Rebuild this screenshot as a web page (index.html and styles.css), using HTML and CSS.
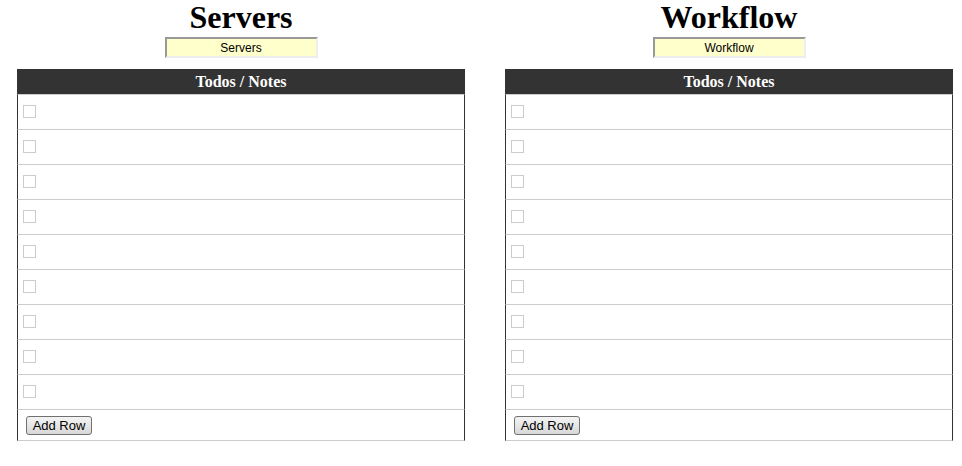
FILE: index.html
```html
<!DOCTYPE html>
<html>
<head>
<meta charset="utf-8">
<link rel="stylesheet" href="styles.css">
</head>
<body>
<div class="page">
  <section class="panel">
    <h1 class="title">Servers</h1>
    <input class="name" type="text" value="Servers">
    <div class="list">
      <div class="head">Todos / Notes</div>
      <div class="row"><span class="box"></span></div>
      <div class="row"><span class="box"></span></div>
      <div class="row"><span class="box"></span></div>
      <div class="row"><span class="box"></span></div>
      <div class="row"><span class="box"></span></div>
      <div class="row"><span class="box"></span></div>
      <div class="row"><span class="box"></span></div>
      <div class="row"><span class="box"></span></div>
      <div class="row"><span class="box"></span></div>
      <div class="row add"><button class="btn">Add Row</button></div>
    </div>
  </section>
  <section class="panel">
    <h1 class="title">Workflow</h1>
    <input class="name" type="text" value="Workflow">
    <div class="list">
      <div class="head">Todos / Notes</div>
      <div class="row"><span class="box"></span></div>
      <div class="row"><span class="box"></span></div>
      <div class="row"><span class="box"></span></div>
      <div class="row"><span class="box"></span></div>
      <div class="row"><span class="box"></span></div>
      <div class="row"><span class="box"></span></div>
      <div class="row"><span class="box"></span></div>
      <div class="row"><span class="box"></span></div>
      <div class="row"><span class="box"></span></div>
      <div class="row add"><button class="btn">Add Row</button></div>
    </div>
  </section>
</div>
</body>
</html>
```
FILE: styles.css
```css
html, body {
  margin: 0;
  padding: 0;
  background: #fff;
}
.page {
  display: flex;
  gap: 40px;
  padding-left: 17px;
}
.panel {
  width: 448px;
  display: flex;
  flex-direction: column;
  align-items: center;
}
.title {
  margin: 0;
  font-family: "Liberation Serif", "Times New Roman", serif;
  font-weight: bold;
  font-size: 32px;
  line-height: 34px;
  color: #000;
}
.name {
  margin: 3px 0 0 0;
  width: 153px;
  height: 21px;
  box-sizing: border-box;
  padding: 1px 0 0 0;
  border-style: solid;
  border-width: 2px;
  border-color: #999 #eee #eee #999;
  background: #ffffcc;
  text-align: center;
  font-family: "Liberation Sans", Arial, sans-serif;
  font-size: 12px;
  color: #000;
}
.list {
  margin-top: 11px;
  width: 100%;
}
.head {
  height: 25px;
  background: #333;
  color: #fff;
  text-align: center;
  font-family: "Liberation Serif", "Times New Roman", serif;
  font-weight: bold;
  font-size: 16px;
  line-height: 25px;
}
.row {
  height: 35px;
  box-sizing: border-box;
  border-top: 1px solid #ccc;
  border-left: 1px solid #333;
  border-right: 1px solid #333;
  padding: 10px 0 0 5px;
  display: flex;
  align-items: flex-start;
}
.box {
  display: block;
  width: 13px;
  height: 13px;
  box-sizing: border-box;
  border: 1px solid #ccc;
  background: #fff;
}
.row.add {
  height: 32px;
  border-bottom: 1px solid #ccc;
  padding: 6px 0 0 8px;
}
.btn {
  margin: 0;
  height: 19px;
  width: 66px;
  box-sizing: border-box;
  padding: 0;
  border: 1px solid #707070;
  border-radius: 3px;
  background: linear-gradient(#f4f4f4, #e6e6e6 50%, #d8d8d8);
  font-family: "Liberation Sans", Arial, sans-serif;
  font-size: 13px;
  line-height: 17px;
  color: #000;
}
```
